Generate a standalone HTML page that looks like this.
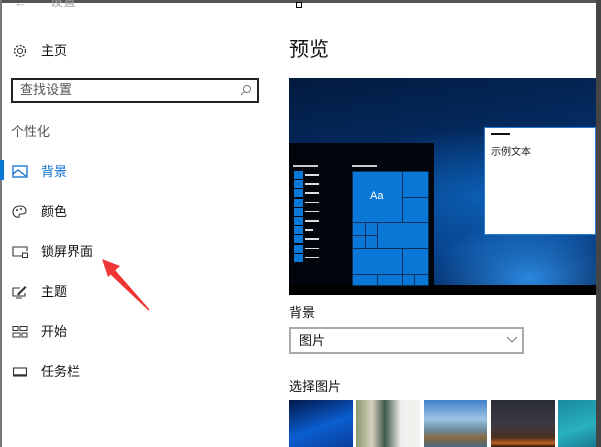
<!DOCTYPE html>
<html><head><meta charset="utf-8"><style>
*{margin:0;padding:0;box-sizing:border-box}
body{width:601px;height:447px;overflow:hidden;background:#fff;position:relative;font-family:"Liberation Sans","Noto Sans CJK SC",sans-serif;color:#111}
.a{position:absolute}
.t{font-size:13px;line-height:16px;white-space:nowrap}
.ic{position:absolute;left:12px;width:16px;height:14px}
.tile{position:absolute;background:#0a78d7;outline:1px solid #08305a}
</style></head><body>
<div class="a" style="left:0;top:0;width:601px;height:3px;background:#555"></div>
<div class="a" style="left:0;top:0;width:2px;height:447px;background:#777"></div>
<div class="a" style="left:596px;top:0;width:5px;height:447px;background:#454545"></div>
<div class="a" style="left:296px;top:2px;width:6px;height:6px;border:1px solid #000;background:#fff"></div>
<div class="a t" style="left:14px;top:-5px;color:#aaa">←</div>
<div class="a t" style="left:50px;top:-6px;color:#aaa">设置</div>

<svg class="ic" style="top:43px;left:11px;width:18px;height:16px" viewBox="0 0 16 16"><circle cx="8" cy="8" r="2.5" fill="none" stroke="#333" stroke-width="1.1"/><circle cx="8" cy="8" r="5.5" fill="none" stroke="#333" stroke-width="1.3" stroke-dasharray="2.2 1.4"/></svg>
<div class="a t" style="left:41px;top:43px">主页</div>

<div class="a" style="left:11px;top:78px;width:248px;height:25px;border:2px solid #222"></div>
<div class="a t" style="left:20px;top:82px;color:#555">查找设置</div>
<svg class="a" style="left:240px;top:84px" width="12" height="12" viewBox="0 0 12 12"><circle cx="7" cy="5" r="3.5" fill="none" stroke="#777"/><line x1="4.5" y1="7.5" x2="1" y2="11" stroke="#777"/></svg>

<div class="a t" style="left:11px;top:124px;color:#555">个性化</div>

<div class="a" style="left:0;top:160px;width:4px;height:20px;background:#0a78d7"></div>
<svg class="ic" style="top:165px" viewBox="0 0 16 14"><rect x="1" y="1" width="14" height="11" fill="none" stroke="#0a6fcf" stroke-width="1.3"/><path d="M1 9 L6 5 L14 11" fill="none" stroke="#0a6fcf" stroke-width="1.2"/></svg>
<div class="a t" style="left:41px;top:164px;color:#0a6fcf">背景</div>

<svg class="ic" style="top:205px" viewBox="0 0 16 14"><path d="M8 1C3 1 1 4 1 7c0 4 4 6 6 5 1-1-1-3 1-3 3 0 6 0 6-3S12 1 8 1z" fill="none" stroke="#333" stroke-width="1.1"/><circle cx="5" cy="5" r="1" fill="#333"/><circle cx="9" cy="4" r="1" fill="#333"/></svg>
<div class="a t" style="left:41px;top:204px">颜色</div>

<svg class="ic" style="top:245px" viewBox="0 0 16 14"><path d="M10 11H1V2h14v4" fill="none" stroke="#333" stroke-width="1.1"/><rect x="10.5" y="8" width="5" height="4.5" fill="none" stroke="#333"/></svg>
<div class="a t" style="left:41px;top:244px">锁屏界面</div>

<svg class="ic" style="top:285px" viewBox="0 0 16 14"><path d="M8 3H1v8h12V8" fill="none" stroke="#333" stroke-width="1.1"/><path d="M5 9l8-8 1.5 1.5-8 8z" fill="#333"/><line x1="4" y1="13" x2="10" y2="13" stroke="#333"/></svg>
<div class="a t" style="left:41px;top:284px">主题</div>

<svg class="ic" style="top:325px" viewBox="0 0 16 14"><rect x="1" y="1.5" width="5" height="4" fill="none" stroke="#333"/><rect x="8" y="1.5" width="7" height="4" fill="none" stroke="#333"/><rect x="1" y="8" width="7" height="4" fill="none" stroke="#333"/><rect x="10" y="8" width="5" height="4" fill="none" stroke="#333"/></svg>
<div class="a t" style="left:41px;top:324px">开始</div>

<svg class="ic" style="top:365px" viewBox="0 0 16 14"><rect x="1.5" y="3" width="13" height="8" fill="none" stroke="#333" stroke-width="1.1"/><line x1="1.5" y1="10" x2="14.5" y2="10" stroke="#333" stroke-width="1.5"/></svg>
<div class="a t" style="left:41px;top:364px">任务栏</div>

<svg class="a" style="left:0;top:0" width="601" height="447"><path d="M149 310 L114 270 L110 273 Z" fill="#f03535" stroke="#f03535" stroke-width="1.5"/><path d="M102 259 L120 266 L108 277 Z" fill="#f03535"/></svg>

<div class="a" style="left:289px;top:38px;font-size:20px;line-height:24px;color:#111">预览</div>

<div class="a" style="left:289px;top:78px;width:307px;height:217px;overflow:hidden;background:radial-gradient(ellipse 100px 60px at 240px 200px,#2a88e0,transparent),radial-gradient(ellipse 160px 70px at 200px 120px,#0c5fb5,transparent),linear-gradient(170deg,#031a3f 0%,#04306a 45%,#063f88 75%,#041f4a 100%)">
 <div class="a" style="left:0;top:65px;width:145px;height:152px;background:#03050c"></div>
 <div class="a" style="left:0;top:207px;width:307px;height:10px;background:#000"></div>
 <div class="a" style="left:195px;top:49px;width:112px;height:108px;background:#fff;border:1px solid #2a7ad0"></div>
 <div class="a" style="left:202px;top:55px;width:19px;height:2px;background:#111"></div>
 <div class="a" style="left:202px;top:65px;font-size:10px;color:#222;white-space:nowrap">示例文本</div>
 <div class="a" style="left:4px;top:87px;width:25px;height:1.5px;background:#ccc"></div>
 <div class="a" style="left:63px;top:87px;width:25px;height:1.5px;background:#ccc"></div>
</div>
<script>
var h='';for(var i=0;i<10;i++){h+='<div class="a" style="left:294px;top:'+(171+i*9.2)+'px;width:9px;height:8px;background:#0a78d7"></div><div class="a" style="left:305px;top:'+(174+i*9.2)+'px;width:'+(i==6?8:14)+'px;height:1.5px;background:#ddd"></div>';}
document.write(h);
</script>
<div class="tile" style="left:353px;top:172px;width:49px;height:50px"></div>
<div class="a" style="left:370px;top:190px;font-size:11px;color:#fff">Aa</div>
<div class="tile" style="left:403px;top:172px;width:25px;height:25px"></div>
<div class="tile" style="left:403px;top:198px;width:25px;height:24px"></div>
<div class="tile" style="left:353px;top:223px;width:12px;height:12px"></div>
<div class="tile" style="left:366px;top:223px;width:11px;height:12px"></div>
<div class="tile" style="left:353px;top:236px;width:12px;height:12px"></div>
<div class="tile" style="left:366px;top:236px;width:11px;height:12px"></div>
<div class="tile" style="left:378px;top:223px;width:50px;height:25px"></div>
<div class="tile" style="left:353px;top:249px;width:49px;height:25px"></div>
<div class="tile" style="left:403px;top:249px;width:25px;height:25px"></div>
<div class="tile" style="left:353px;top:275px;width:24px;height:10px"></div>
<div class="tile" style="left:378px;top:275px;width:24px;height:10px"></div>
<div class="tile" style="left:403px;top:275px;width:11px;height:10px"></div>
<div class="tile" style="left:415px;top:275px;width:13px;height:10px"></div>

<div class="a t" style="left:289px;top:305px">背景</div>
<div class="a" style="left:289px;top:327px;width:235px;height:27px;border:2px solid #aaa"></div>
<div class="a t" style="left:299px;top:333px">图片</div>
<svg class="a" style="left:506px;top:336px" width="12" height="8"><path d="M1 1 L6 6 L11 1" fill="none" stroke="#777"/></svg>
<div class="a t" style="left:289px;top:379px">选择图片</div>

<div class="a" style="left:289px;top:400px;width:64px;height:47px;background:linear-gradient(160deg,#02174a,#0a5ed0 55%,#0a3f9a)"></div>
<div class="a" style="left:356px;top:400px;width:64px;height:47px;background:linear-gradient(90deg,#8a9a70 0%,#d8d0c0 25%,#3f5a48 45%,#eee 70%,#f4f2ee 100%)"></div>
<div class="a" style="left:424px;top:400px;width:63px;height:47px;background:linear-gradient(180deg,#3f80c8 0%,#9cc4e4 40%,#6a8a9a 65%,#8a6a40 80%,#4a6a80 100%)"></div>
<div class="a" style="left:491px;top:400px;width:64px;height:47px;background:linear-gradient(180deg,#2a2c35 0%,#3a3a45 50%,#4a3020 80%,#c06020 92%,#201510 100%)"></div>
<div class="a" style="left:558px;top:400px;width:38px;height:47px;background:linear-gradient(160deg,#1a8aa0,#27b0c0 60%,#1a7a90)"></div>
</body></html>
